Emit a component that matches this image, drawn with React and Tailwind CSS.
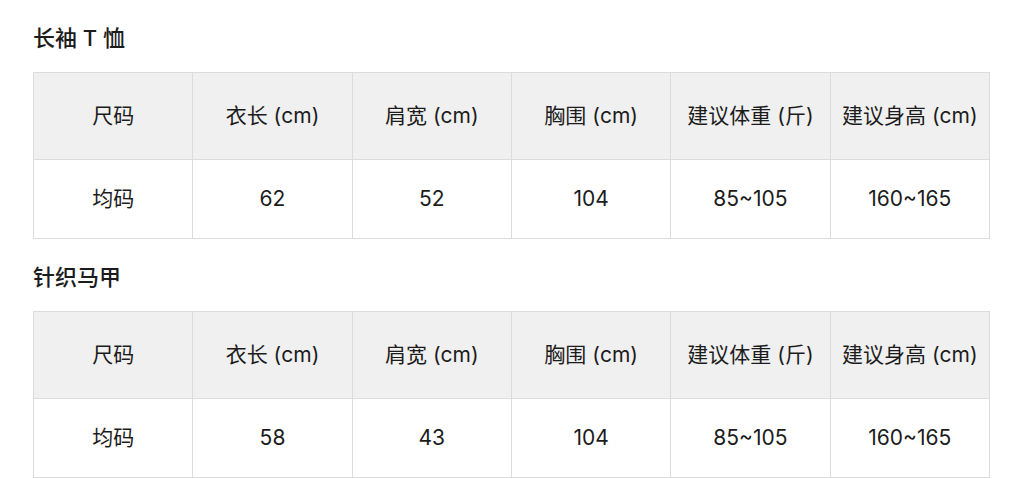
const headers = ["尺码", "衣长 (cm)", "肩宽 (cm)", "胸围 (cm)", "建议体重 (斤)", "建议身高 (cm)"];

const items = [
  { title: "长袖 T 恤", row: ["均码", "62", "52", "104", "85~105", "160~165"] },
  { title: "针织马甲", row: ["均码", "58", "43", "104", "85~105", "160~165"] },
];

function SizeTable({ row }) {
  return (
    <table className="w-[957px] table-fixed border-collapse text-[21px] text-[#1c1c1c]">
      <thead>
        <tr className="h-[87px] bg-[#f0f0f0]">
          {headers.map((h) => (
            <th key={h} className="border border-[#dcdcdc] px-0 text-center font-normal">
              {h}
            </th>
          ))}
        </tr>
      </thead>
      <tbody>
        <tr className="h-[79px] bg-white">
          {row.map((c, i) => (
            <td key={i} className="border border-[#dcdcdc] text-center">
              {c}
            </td>
          ))}
        </tr>
      </tbody>
    </table>
  );
}

export default function App() {
  return (
    <div
      className="min-h-[478px] bg-white pl-[33px] pt-[24px] text-[#1c1c1c]"
      style={{ fontFamily: 'Inter, "Noto Sans CJK SC", sans-serif' }}
    >
      {items.map((it, i) => (
        <div key={it.title} className={i > 0 ? "mt-[24px]" : ""}>
          <h2 className="mb-[20px] text-[22px] leading-[28px] font-medium">{it.title}</h2>
          <SizeTable row={it.row} />
        </div>
      ))}
    </div>
  );
}
